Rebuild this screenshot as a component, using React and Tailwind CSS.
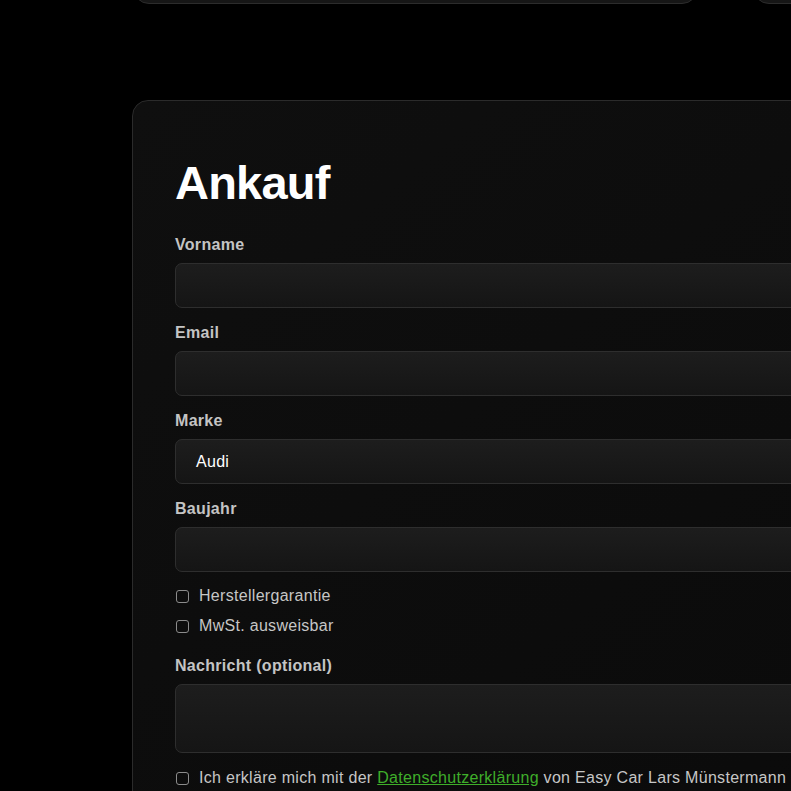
import React from "react";

const Field = ({ label, value, tall }) => {
  return (
    <div className="mb-[13px]">
      <label className="mb-[6px] block text-base font-bold leading-6 tracking-[0.3px] text-[#c4c4c4]">
        {label}
      </label>
      <div
        className={`flex items-center rounded-[7px] border border-[#2e2e2e] bg-gradient-to-b from-[#1d1d1d] to-[#151515] pl-5 text-base tracking-[0.3px] text-white ${
          tall ? "h-[69px]" : "h-[45px]"
        }`}
      >
        {value}
      </div>
    </div>
  );
};

const Check = ({ children }) => {
  return (
    <div className="flex h-6 items-center gap-[10px] text-base tracking-[0.3px] text-[#c6c6c6]">
      <span className="ml-px h-[13px] w-[13px] shrink-0 rounded-[3px] border border-[#8c8c8c]" />
      <span className="whitespace-nowrap">{children}</span>
    </div>
  );
};

export default function App() {
  return (
    <div className="h-[791px] w-[791px] overflow-hidden bg-black font-['Liberation_Sans',Arial,sans-serif]">
      {/* cards above, cut off by the viewport */}
      <div className="-mt-[56px] flex gap-[55px] pl-[133px]">
        <div className="h-[60px] w-[565px] shrink-0 rounded-2xl border border-[#2c2c2c] bg-[#161616]" />
        <div className="h-[60px] w-[300px] shrink-0 rounded-2xl border border-[#2c2c2c] bg-[#161616]" />
      </div>

      <div className="ml-[132px] mt-[96px] w-[900px] rounded-2xl border border-[#2b2b2b] bg-gradient-to-br from-[#0f0f0f] to-[#0a0a0a] pl-[42px] pt-[54px]">
        <h1 className="mb-[23px] text-[47px] font-bold leading-[55px] tracking-[-0.8px] text-white">
          Ankauf
        </h1>

        <Field label="Vorname" />
        <Field label="Email" />
        <Field label="Marke" value="Audi" />
        <Field label="Baujahr" />

        <div className="-mt-px mb-[16px] flex flex-col gap-[6px]">
          <Check>Herstellergarantie</Check>
          <Check>MwSt. ausweisbar</Check>
        </div>

        <Field label="Nachricht (optional)" tall />

        <Check>
          Ich erkläre mich mit der{" "}
          <a href="#" className="text-[#3fae2a] underline">
            Datenschutzerklärung
          </a>{" "}
          von Easy Car Lars Münstermann einverstanden.
        </Check>
        <div className="h-10" />
      </div>
    </div>
  );
}
